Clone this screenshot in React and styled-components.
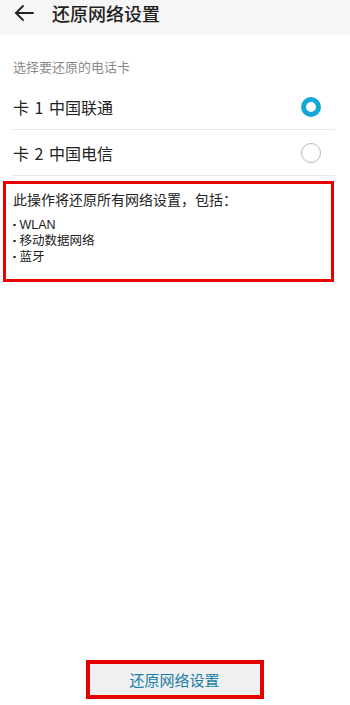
import styled, { createGlobalStyle } from 'styled-components';

const GlobalStyle = createGlobalStyle`
  html, body {
    margin: 0;
    padding: 0;
    background: #ffffff;
  }
  body {
    font-family: "Noto Sans CJK SC", Roboto, "Noto Sans", sans-serif;
  }
`;

const Page = styled.div`
  min-height: 705px;
  display: flex;
  flex-direction: column;
  background: #fff;
`;

const Header = styled.div`
  height: 35px;
  box-sizing: border-box;
  background: #f6f6f6;
  display: flex;
  align-items: flex-start;
  padding: 1px 0 0 14px;
  gap: 18px;
`;

const BackIcon = styled.svg`
  width: 20px;
  height: 24px;
  flex-shrink: 0;
`;

const Title = styled.h1`
  margin: 0;
  font-size: 18px;
  line-height: 24px;
  font-weight: 500;
  color: #1f1f1f;
`;

const SectionLabel = styled.div`
  padding: 23px 0 0 13px;
  font-size: 13px;
  line-height: 18px;
  color: #8a8a8a;
`;

const List = styled.div`
  margin-top: 8px;
  padding: 0 15px 0 12px;
`;

const Row = styled.div`
  height: 46px;
  display: flex;
  align-items: center;
  justify-content: space-between;
  border-bottom: 1px solid #e8e8e8;
  padding: 0 14px 0 1px;
  box-sizing: border-box;
`;

const RowText = styled.span`
  font-size: 16px;
  color: #222;
  word-spacing: 2px;
`;

const Radio = styled.span`
  width: 20px;
  height: 20px;
  box-sizing: border-box;
  border-radius: 50%;
  border: ${(p) => (p.$checked ? '5.5px solid #14a8d8' : '1px solid #b8b8b8')};
  background: #fff;
`;

const Notice = styled.div`
  margin: 5px 16px 0 3px;
  border: 3px solid #e60000;
  padding: 5px 7px 14px;
`;

const NoticeTitle = styled.div`
  font-size: 14px;
  line-height: 20px;
  color: #222;
  margin-bottom: 8px;
`;

const Bullet = styled.div`
  font-family: "Liberation Sans", "Noto Sans CJK SC", sans-serif;
  font-size: 12.5px;
  line-height: 16px;
  color: #222;
  display: flex;
  align-items: center;

  &::before {
    content: '';
    width: 2.5px;
    height: 2.5px;
    border-radius: 50%;
    background: #333;
    margin-right: 4px;
  }
`;

const Spacer = styled.div`
  flex: 1;
`;

const ResetButton = styled.button`
  align-self: center;
  width: 178px;
  height: 39px;
  margin: 0 0 6px -1px;
  border: 4px solid #e60000;
  background: #f0f0f0;
  color: #1a7fa6;
  font-family: inherit;
  font-size: 15px;
  padding: 0;
`;

const App = () => {
  return (
    <Page>
      <GlobalStyle />
      <Header>
        <BackIcon viewBox="0 0 20 24" fill="none" stroke="#222" strokeWidth="1.8" strokeLinecap="round" strokeLinejoin="round">
          <path d="M19 12H2" />
          <path d="M9 5l-7 7 7 7" />
        </BackIcon>
        <Title>还原网络设置</Title>
      </Header>

      <SectionLabel>选择要还原的电话卡</SectionLabel>

      <List>
        <Row>
          <RowText>卡 1 中国联通</RowText>
          <Radio $checked />
        </Row>
        <Row>
          <RowText>卡 2 中国电信</RowText>
          <Radio />
        </Row>
      </List>

      <Notice>
        <NoticeTitle>此操作将还原所有网络设置，包括：</NoticeTitle>
        <Bullet>WLAN</Bullet>
        <Bullet>移动数据网络</Bullet>
        <Bullet>蓝牙</Bullet>
      </Notice>

      <Spacer />
      <ResetButton>还原网络设置</ResetButton>
    </Page>
  );
};

export default App;
